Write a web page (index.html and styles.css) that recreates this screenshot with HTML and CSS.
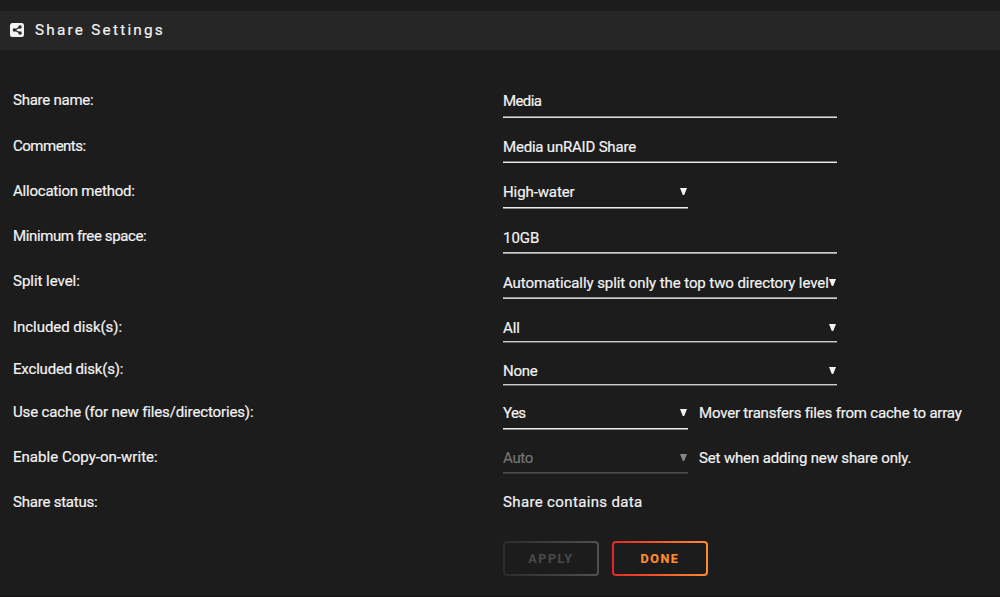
FILE: index.html
```html
<!DOCTYPE html>
<html lang="en">
<head>
<meta charset="utf-8">
<title>Share Settings</title>
<link rel="stylesheet" href="styles.css">
</head>
<body>
<main class="page">
  <header class="title">
    <svg class="title-icon" viewBox="0 0 14 14" width="14" height="14"><rect width="14" height="14" rx="2.5" fill="#f2f2f2"/><path d="M10 4 4.7 7 10 10" fill="none" stroke="#262626" stroke-width="1.3"/><circle cx="10" cy="4" r="1.75" fill="#262626"/><circle cx="4.4" cy="7" r="1.75" fill="#262626"/><circle cx="10" cy="10" r="1.75" fill="#262626"/></svg>
    <h1 class="title-text">Share Settings</h1>
  </header>
  <form class="settings">
    <div class="row row-name"><label><span class="t-name">Share name:</span></label><div class="field wide"><span class="v-media">Media</span></div></div>
    <div class="row row-comments"><label><span class="t-comments">Comments:</span></label><div class="field wide"><span class="v-comments">Media unRAID Share</span></div></div>
    <div class="row row-alloc"><label><span class="t-alloc">Allocation method:</span></label><div class="field"><span class="v-alloc">High-water</span><i class="arrow"></i></div></div>
    <div class="row row-free"><label><span class="t-free">Minimum free space:</span></label><div class="field wide"><span class="v-free">10GB</span></div></div>
    <div class="row row-split"><label><span class="t-split">Split level:</span></label><div class="field wide"><span class="v-split">Automatically split only the top two directory level</span><i class="arrow"></i></div></div>
    <div class="row row-inc"><label><span class="t-inc">Included disk(s):</span></label><div class="field wide"><span class="v-all">All</span><i class="arrow"></i></div></div>
    <div class="row row-exc"><label><span class="t-exc">Excluded disk(s):</span></label><div class="field wide"><span class="v-none">None</span><i class="arrow"></i></div></div>
    <div class="row row-cache"><label><span class="t-cache">Use cache (for new files/directories):</span></label><div class="field"><span class="v-yes">Yes</span><i class="arrow"></i></div><div class="note"><span class="n-mover">Mover transfers files from cache to array</span></div></div>
    <div class="row row-cow"><label><span class="t-cow">Enable Copy-on-write:</span></label><div class="field disabled"><span class="v-auto">Auto</span><i class="arrow"></i></div><div class="note"><span class="n-set">Set when adding new share only.</span></div></div>
    <div class="row row-status"><label><span class="t-status">Share status:</span></label><div class="status"><span class="v-status">Share contains data</span></div></div>
    <div class="actions">
      <button type="button" class="btn btn-apply" disabled>APPLY</button>
      <button type="button" class="btn btn-done">DONE</button>
    </div>
  </form>
</main>
</body>
</html>
```
FILE: styles.css
```css
* { box-sizing: border-box; }
body { margin: 0; background: #1c1c1c; color: #f2f2f2; font: 15px/20px Roboto, "Noto Sans", sans-serif; -webkit-text-stroke: .2px; }
.page { height: 597px; padding-top: 11px; overflow: hidden; border-bottom: 1px solid #151112; }
.title { display: flex; align-items: center; height: 39px; padding: 0 10px 1px; background: #262626; gap: 11px; }
.title-icon { margin-bottom: 1px; }
.title-text { margin: 0; font-size: 15.3px; font-weight: 400; letter-spacing: 2.24px; }
.settings { padding: 40px 0 0 13px; }

.row { display: flex; align-items: flex-start; height: 45px; white-space: nowrap; }
.row label { width: 490px; flex: none; }
.field { display: flex; justify-content: space-between; width: 185px; height: 28px; padding-top: 1px; background: linear-gradient(var(--a, #eee) 50%, var(--b, #888) 50%) bottom / 100% 2px no-repeat; }
.wide { width: 334px; }
.arrow { flex: none; width: 7px; height: 7px; margin: 6px 1px 0 0; background: #f2f2f2; clip-path: polygon(0 0, 100% 0, 60% 100%, 40% 100%); }
.disabled { color: #757575; }
.disabled .arrow { background: #858585; }
.note { padding: 1px 0 0 11px; }

.row-name { height: 46px; --a: #888; --b: #ddd; }
.row-comments { --a: #777; --b: #eee; }
.row-comments .field { height: 27px; }
.row-free { --a: #ccc; --b: #999; }
.row-split { height: 46px; --a: #999; --b: #ccc; }
.row-free .field, .row-split .field { padding-top: 2px; }
.row-inc { height: 42px; --a: #ccc; --b: #666; }
.row-inc .field { height: 26px; }
.row-exc { height: 43px; --a: #ccc; --b: #666; }
.row-exc .field { height: 27px; padding-top: 2px; }
.row-cow { --a: #4a4a4a; --b: #3c3c3c; }
.row-cow .field { height: 27px; }

.t-name { letter-spacing: -.25px; }
.t-comments { letter-spacing: -.5px; }
.t-alloc { letter-spacing: -.22px; }
.t-free { letter-spacing: -.38px; }
.t-split { letter-spacing: -.03px; }
.t-inc { letter-spacing: -.05px; }
.t-exc { letter-spacing: -.18px; }
.t-cache { letter-spacing: -.14px; }
.t-cow { letter-spacing: .03px; }
.t-status { letter-spacing: -.22px; }
.v-media { letter-spacing: -.6px; }
.v-comments { letter-spacing: -.2px; }
.v-alloc { letter-spacing: -.1px; }
.v-split { letter-spacing: -.08px; }
.v-all { letter-spacing: -.15px; }
.v-none, .v-auto { letter-spacing: -.3px; }
.v-yes { letter-spacing: -.6px; }
.n-mover { letter-spacing: -.19px; }
.n-set { letter-spacing: -.15px; }
.v-status { letter-spacing: .36px; }

.actions { display: flex; gap: 13px; padding: 0 0 0 490px; margin-top: 4px; }
.btn { width: 96px; height: 35px; padding: 0; border: 2px solid transparent; border-radius: 4px; font: 700 12.5px/20px Roboto, sans-serif; letter-spacing: 1.6px; }
.btn-apply { color: #484848; background: linear-gradient(#1c1c1c, #1c1c1c) padding-box, linear-gradient(90deg, #2c2c2c, #505050) border-box; }
.btn-done { color: #ff8c2f; background: linear-gradient(#1c1c1c, #1c1c1c) padding-box, linear-gradient(90deg, #e22828, #ff8c2f) border-box; }
```
